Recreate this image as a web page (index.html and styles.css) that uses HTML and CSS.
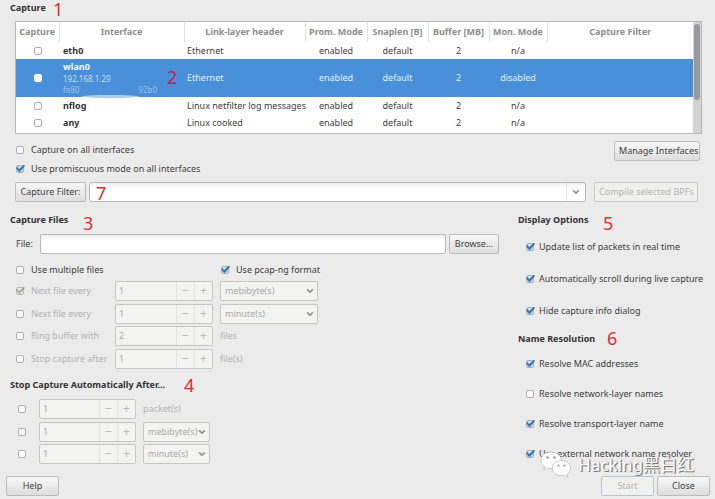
FILE: index.html
```
<!DOCTYPE html>
<html lang="en">
<head>
<meta charset="utf-8">
<title>Capture Options</title>
<link rel="stylesheet" href="styles.css">
</head>
<body>
<svg class="defs" aria-hidden="true">
  <symbol id="tick" viewBox="0 0 12 10"><path class="tick-shade" d="M3 3.5 5 6 10.6 1.2 10.2 3 5.6 8.4 2.4 5Z"/><path class="tick-line" d="M2.8 3.6 5.2 6.4 10.4 1.4"/></symbol>
  <symbol id="chevron" viewBox="0 0 8 6"><path d="M1.2 1.4 4 4.2 6.8 1.4"/></symbol>
</svg>
<main class="dialog">
  <section class="capture">
    <h2>Capture</h2>
    <div class="table-box">
      <table>
        <colgroup><col class="c-check"><col class="c-iface"><col class="c-link"><col class="c-prom"><col class="c-mid"><col class="c-mid"><col class="c-mon"><col></colgroup>
        <thead><tr><th>Capture</th><th>Interface</th><th>Link-layer header</th><th>Prom. Mode</th><th>Snaplen [B]</th><th>Buffer [MB]</th><th>Mon. Mode</th><th>Capture Filter</th></tr></thead>
        <tbody>
          <tr><td><input type="checkbox" aria-label="Capture eth0"></td><td class="name">eth0</td><td class="left">Ethernet</td><td>enabled</td><td>default</td><td>2</td><td>n/a</td><td></td></tr>
          <tr class="selected"><td><input type="checkbox" aria-label="Capture wlan0"></td><td class="name">wlan0<span class="ip">192.168.1.29</span><span class="ip6"><span>fe80</span><span>92b0</span></span><span class="smudge"></span></td><td class="left">Ethernet</td><td>enabled</td><td>default</td><td>2</td><td>disabled</td><td></td></tr>
          <tr><td><input type="checkbox" aria-label="Capture nflog"></td><td class="name">nflog</td><td class="left">Linux netfilter log messages</td><td>enabled</td><td>default</td><td>2</td><td>n/a</td><td></td></tr>
          <tr><td><input type="checkbox" aria-label="Capture any"></td><td class="name">any</td><td class="left">Linux cooked</td><td>enabled</td><td>default</td><td>2</td><td>n/a</td><td></td></tr>
        </tbody>
      </table>
      <div class="scroll"><div class="thumb"></div></div>
    </div>
    <div class="all-row">
      <div class="all-checks">
        <label class="check"><span class="box"><input type="checkbox"></span>Capture on all interfaces</label>
        <label class="check"><span class="box"><input type="checkbox" checked><svg><use href="#tick"/></svg></span>Use promiscuous mode on all interfaces</label>
      </div>
      <button class="manage">Manage Interfaces</button>
    </div>
    <div class="filter-row">
      <button class="filter-button">Capture Filter:</button>
      <div class="combo"><input type="text" aria-label="Capture filter"><button aria-label="Show filters"><svg class="chevron"><use href="#chevron"/></svg></button></div>
      <button class="compile" disabled>Compile selected BPFs</button>
    </div>
  </section>

  <div class="columns">
    <div class="left-column">
      <section class="files">
        <h2>Capture Files</h2>
        <div class="file-row"><label for="file">File:</label><input class="file" id="file" type="text"><button class="browse">Browse...</button></div>
        <div class="file-grid head">
          <label class="check span"><span class="box"><input type="checkbox"></span>Use multiple files</label>
          <label class="check pcap"><span class="box"><input type="checkbox" checked><svg><use href="#tick"/></svg></span>Use pcap-ng format</label>
        </div>
        <div class="file-grid body">
          <label class="check off"><span class="box"><input type="checkbox" checked disabled><svg><use href="#tick"/></svg></span>Next file every</label>
          <div class="spin"><input type="text" value="1" disabled aria-label="File size"><button disabled>−</button><button disabled>+</button></div>
          <div class="select"><select disabled aria-label="File size unit"><option>mebibyte(s)</option></select><svg class="chevron"><use href="#chevron"/></svg></div>
          <label class="check off"><span class="box"><input type="checkbox" disabled></span>Next file every</label>
          <div class="spin"><input type="text" value="1" disabled aria-label="File duration"><button disabled>−</button><button disabled>+</button></div>
          <div class="select"><select disabled aria-label="File duration unit"><option>minute(s)</option></select><svg class="chevron"><use href="#chevron"/></svg></div>
          <label class="check off"><span class="box"><input type="checkbox" disabled></span>Ring buffer with</label>
          <div class="spin"><input type="text" value="2" disabled aria-label="Ring buffer files"><button disabled>−</button><button disabled>+</button></div>
          <span class="off">files</span>
          <label class="check off"><span class="box"><input type="checkbox" disabled></span>Stop capture after</label>
          <div class="spin"><input type="text" value="1" disabled aria-label="Stop after files"><button disabled>−</button><button disabled>+</button></div>
          <span class="off">file(s)</span>
        </div>
      </section>
      <section class="stop">
        <h2>Stop Capture Automatically After...</h2>
        <div class="stop-grid">
          <input type="checkbox" aria-label="Stop after packets">
          <div class="spin"><input type="text" value="1" disabled aria-label="Packets"><button disabled>−</button><button disabled>+</button></div>
          <span class="off">packet(s)</span>
          <input type="checkbox" aria-label="Stop after size">
          <div class="spin"><input type="text" value="1" disabled aria-label="Size"><button disabled>−</button><button disabled>+</button></div>
          <div class="select"><select disabled aria-label="Size unit"><option>mebibyte(s)</option></select><svg class="chevron"><use href="#chevron"/></svg></div>
          <input type="checkbox" aria-label="Stop after time">
          <div class="spin"><input type="text" value="1" disabled aria-label="Time"><button disabled>−</button><button disabled>+</button></div>
          <div class="select"><select disabled aria-label="Time unit"><option>minute(s)</option></select><svg class="chevron"><use href="#chevron"/></svg></div>
        </div>
      </section>
    </div>
    <div class="right-column">
      <section>
        <h2>Display Options</h2>
        <div class="options display">
          <label class="check"><span class="box"><input type="checkbox" checked><svg><use href="#tick"/></svg></span>Update list of packets in real time</label>
          <label class="check"><span class="box"><input type="checkbox" checked><svg><use href="#tick"/></svg></span>Automatically scroll during live capture</label>
          <label class="check"><span class="box"><input type="checkbox" checked><svg><use href="#tick"/></svg></span>Hide capture info dialog</label>
        </div>
      </section>
      <section>
        <h2>Name Resolution</h2>
        <div class="options names">
          <label class="check"><span class="box"><input type="checkbox" checked><svg><use href="#tick"/></svg></span>Resolve MAC addresses</label>
          <label class="check"><span class="box"><input type="checkbox"></span>Resolve network-layer names</label>
          <label class="check"><span class="box"><input type="checkbox" checked><svg><use href="#tick"/></svg></span>Resolve transport-layer name</label>
          <label class="check"><span class="box"><input type="checkbox" checked><svg><use href="#tick"/></svg></span>Use external network name resolver</label>
        </div>
      </section>
    </div>
  </div>

  <footer>
    <button>Help</button>
    <span class="spacer"></span>
    <button class="start" disabled>Start</button>
    <button>Close</button>
  </footer>

  <span class="note n1">1</span><span class="note n2">2</span><span class="note n3">3</span><span class="note n4">4</span><span class="note n5">5</span><span class="note n6">6</span><span class="note n7">7</span>

  <div class="watermark">
    <svg viewBox="0 0 32 28">
      <path class="bubble" d="M11 1C5 1 .8 4.6.8 9.2c0 2.8 1.6 5 4 6.6L3.6 19l4-2c1.2.4 2.2.5 3.4.5 6 0 10.2-3.7 10.2-8.3S17 1 11 1Z"/>
      <path class="bubble" d="M21.500 9.500c-5 0-9 3.200-9 7.600s4 7.600 9 7.600c1.200 0 2.200-.2 3.200-.5l3.400 1.900-1-3c2.200-1.500 3.500-3.500 3.500-6 0-4.400-4-7.600-9.100-7.600Z"/>
      <g class="eyes"><circle cx="7.500" cy="6.500" r="1.300"/><circle cx="14.500" cy="6.500" r="1.300"/><circle cx="18.500" cy="14.500" r="1.100"/><circle cx="24.500" cy="14.500" r="1.100"/></g>
    </svg>
    <span>Hacking黑白红</span>
  </div>
</main>
</body>
</html>
```
FILE: styles.css
```
* { box-sizing: border-box; }
body {
  margin: 0;
  background: #ebebeb;
  color: #404040;
  font: 9px/14px "Noto Sans", "Open Sans", sans-serif;
}
.defs { position: absolute; width: 0; height: 0; }
.dialog { position: relative; padding: 1px 5px 3px 6px; }
h2 { margin: 0 0 0 4px; font-size: 9px; line-height: 14px; font-weight: 700; color: #333; }
input, button, select { font: inherit; color: inherit; margin: 0; }

button {
  height: 20px;
  padding: 0 4px;
  border: 1px solid #bcbcbc;
  border-radius: 2px;
  background: linear-gradient(#f7f7f7, #dedede);
  line-height: 16px;
  white-space: nowrap;
}
button:disabled { color: #b4b4b4; border-color: #cacaca; background: #f0f0ef; }

input[type="checkbox"] {
  appearance: none;
  display: block;
  width: 8px;
  height: 8px;
  border: 1px solid #b0b0b0;
  border-radius: 2px;
  background: #f8f8f8;
}
.check { display: flex; align-items: center; gap: 7px; height: 14px; white-space: nowrap; }
.box { position: relative; width: 8px; height: 8px; flex: none; }
.box svg { position: absolute; left: -2px; top: -1px; width: 12px; height: 10px; }
.box input:checked { border-color: #9db4c8; background: #c9dcec; }
.tick-shade { fill: #5d8fbd; }
.tick-line { fill: none; stroke: #3f6f9c; stroke-width: 1.6; }
.off { color: #b2b2b2; }
.off .box input:checked { border-color: #bbb; background: #eee; }
.off .box svg { filter: grayscale(1) opacity(.5); }
.chevron { width: 8px; height: 6px; fill: none; stroke: #8a8a8a; stroke-width: 1.6; }

.table-box {
  display: flex;
  height: 113px;
  margin: 6px 8px 0 9px;
  border: 1px solid #b9b9b9;
  background: #fff;
}
table { flex: 1; height: 109px; width: 100%; table-layout: fixed; border-collapse: collapse; }
.c-check { width: 43px; }
.c-iface { width: 125px; }
.c-link { width: 121px; }
.c-prom { width: 62px; }
.c-mid { width: 61px; }
.c-mon { width: 58px; }
th, td { padding: 0; text-align: center; white-space: nowrap; height: 17px; line-height: 14px; }
th { height: 20px; color: #8d8d8d; font-weight: 700; }
th + th { border-left: 1px solid #e2e2e2; }
td input[type="checkbox"] { margin: 0 auto; }
.name { position: relative; padding-left: 4px; text-align: left; font-weight: 700; color: #333; }
.left { padding-left: 3px; text-align: left; }
.selected { height: 38px; background: #4a90d9; color: #e4effa; }
.selected .name { color: #f2f8ff; line-height: 12px; }
.selected input { border-color: #fff; }
.ip, .ip6 { display: flex; font-weight: 400; font-size: 8px; line-height: 11px; color: #c3dcf5; }
.ip6 { justify-content: space-between; width: 94px; color: #9ac3ec; }
.smudge { position: absolute; left: 22px; bottom: -1px; width: 58px; height: 3px; border-radius: 50%; background: #a8cdf0; }
.scroll { width: 8px; padding: 2px 1px; background: #d3d3d3; }
.thumb { height: 76px; border-radius: 3px; background: #969a9a; }

.all-row { display: flex; justify-content: space-between; margin: 7px 10px 0; }
.all-checks { display: grid; gap: 5px; padding-top: 2px; }
.manage { width: 86px; }
.filter-row { display: flex; margin: 6px 12px 0 9px; }
.filter-button { width: 71px; }
.combo { display: flex; flex: 1; margin: 0 8px 0 3px; border: 1px solid #b8b8b8; border-radius: 3px; background: linear-gradient(#f1f1f1, #fff 6px); }
.combo input { flex: 1; min-width: 0; height: 18px; border: 0; background: none; }
.combo button { width: 19px; height: 18px; border: 0; border-left: 1px solid #e2e2e2; background: none; }
.compile { width: 104px; }

.columns { display: grid; grid-template-columns: minmax(0, 1fr) 196px; column-gap: 15px; margin-top: 11px; }
.file-row { display: flex; align-items: center; margin: 7px 0 0 10px; }
.file-row label { width: 24px; }
.file { flex: 1; min-width: 0; height: 20px; margin-right: 3px; border: 1px solid #b8b8b8; border-radius: 2px; background: linear-gradient(#f1f1f1, #fff 6px); }
.browse { width: 50px; }
.file-grid { display: grid; grid-template-columns: 92px 98px 98px; column-gap: 7px; align-items: center; padding-left: 10px; }
.head { margin-top: 9px; }
.span { grid-column: span 2; }
.pcap { padding-left: 1px; }
.body { height: 88px; margin-top: 4px; align-content: space-between; }
.spin { display: flex; height: 20px; border: 1px solid #c6c6c3; border-radius: 2px; background: #f3f3f1; color: #aaa; }
.spin input { flex: 1; min-width: 0; padding: 0 3px; border: 0; background: none; }
.spin button { width: 18px; height: 18px; padding: 0; border: 0; border-left: 1px solid #e3e3e0; border-radius: 0; background: none; color: #bbb; font-size: 12px; }
.select { position: relative; height: 20px; }
.select select { appearance: none; display: block; width: 100%; height: 20px; padding: 0 4px; border: 1px solid #c6c6c3; border-radius: 2px; background: #f3f3f1; color: #aaa; opacity: 1; }
.select svg { position: absolute; right: 4px; top: 7px; }

.stop { margin-top: 9px; }
.stop-grid { display: grid; grid-template-columns: 14px 97px 67px; column-gap: 7px; height: 65px; align-content: space-between; align-items: center; margin: 7px 0 0 12px; }

.options { display: grid; padding-left: 12px; }
.options .check { gap: 5px; }
.display { gap: 18px; margin: 13px 0 14px; }
.names { gap: 16px; margin-top: 11px; }

footer { display: flex; gap: 3px; margin-top: 12px; }
footer button { width: 53px; }
.spacer { flex: 1; }
.start:disabled { border-color: #b4c4d6; }

.note { position: absolute; font: 18px/18px "Noto Sans", sans-serif; color: #dc2c30; }
.n1 { left: 53px; top: 0; }
.n2 { left: 167px; top: 68px; color: #b02858; }
.n3 { left: 83px; top: 214px; }
.n4 { left: 184px; top: 376px; }
.n5 { left: 603px; top: 214px; }
.n6 { left: 607px; top: 329px; }
.n7 { left: 96px; top: 184px; }

.watermark { position: absolute; right: 21px; bottom: 20px; display: flex; align-items: center; gap: 6px; color: #fff; font: 17px/26px "Noto Sans", "Noto Sans CJK SC", sans-serif; white-space: nowrap; text-shadow: 1px 1px 0 #777, 1px 0 1px #888; }
.watermark svg { width: 32px; height: 28px; }
.bubble { fill: #fff; stroke: #aaa; stroke-width: .6; }
.eyes { fill: #999; }
```
